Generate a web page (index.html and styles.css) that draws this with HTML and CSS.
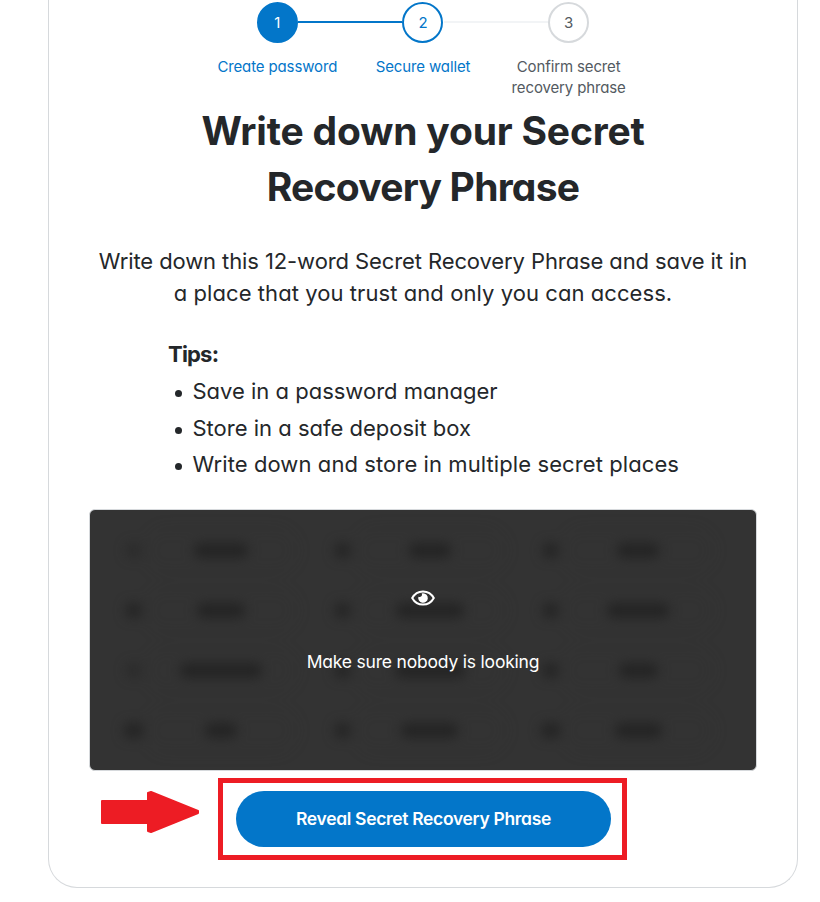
FILE: index.html
```html
<!DOCTYPE html>
<html lang="en">
<head>
<meta charset="utf-8">
<title>Secret Recovery Phrase</title>
<link rel="stylesheet" href="styles.css">
</head>
<body>
<main class="card">
  <ol class="steps">
    <li class="step step-done"><span class="dot">1</span><span class="label">Create password</span></li>
    <li class="step step-active"><span class="dot">2</span><span class="label">Secure wallet</span></li>
    <li class="step"><span class="dot">3</span><span class="label label-muted">Confirm secret<br>recovery phrase</span></li>
  </ol>
  <h1>Write down your Secret<br><span class="title-end">Recovery Phrase</span></h1>
  <p class="intro">Write down this 12-word Secret Recovery Phrase and save it in<br><span class="intro-end">a place that you trust and only you can access.</span></p>
  <section class="tips">
    <h2>Tips:</h2>
    <ul>
      <li>Save in a password manager</li>
      <li>Store in a safe deposit box</li>
      <li class="last">Write down and store in multiple secret places</li>
    </ul>
  </section>
  <section class="phrase">
    <div class="words" aria-hidden="true">
      <div class="word"><i class="num thin"></i><b><i style="width:54px"></i></b></div>
      <div class="word"><i class="num"></i><b><i style="width:42px"></i></b></div>
      <div class="word"><i class="num"></i><b><i style="width:42px"></i></b></div>
      <div class="word"><i class="num"></i><b><i style="width:48px"></i></b></div>
      <div class="word"><i class="num"></i><b><i style="width:68px"></i></b></div>
      <div class="word"><i class="num"></i><b><i style="width:62px"></i></b></div>
      <div class="word"><i class="num thin"></i><b><i style="width:82px"></i></b></div>
      <div class="word"><i class="num"></i><b><i style="width:70px"></i></b></div>
      <div class="word"><i class="num"></i><b><i style="width:39px"></i></b></div>
      <div class="word"><i class="num wide"></i><b><i style="width:32px"></i></b></div>
      <div class="word"><i class="num"></i><b><i style="width:57px"></i></b></div>
      <div class="word"><i class="num wide"></i><b><i style="width:47px"></i></b></div>
    </div>
    <div class="cover">
      <svg class="eye" viewBox="0 0 24 16" width="24" height="16">
        <path d="M1.2 8C3.4 3.9 7.300 1.400 12 1.400S20.600 3.900 22.800 8C20.600 12.100 16.700 14.600 12 14.600S3.400 12.100 1.200 8Z" fill="none" stroke="#fff" stroke-width="2"/>
        <path d="M12 3.200a4.800 4.800 0 1 1-4.600 3.500 2.400 2.400 0 0 0 3.300-3.300A4.800 4.800 0 0 1 12 3.200Z" fill="#fff"/>
      </svg>
      <span>Make sure nobody is looking</span>
    </div>
  </section>
  <div class="action">
    <svg class="arrow" viewBox="0 0 98 42" width="98" height="42"><path d="M1 10H47V2L50 1L97 20V22L50 41L47 40V32H1Z" fill="#ed1c24" stroke="#ed1c24" stroke-width="2" stroke-linejoin="round"/></svg>
    <div class="frame"><button>Reveal Secret Recovery Phrase</button></div>
  </div>
</main>
</body>
</html>
```
FILE: styles.css
```css
* { box-sizing: border-box; }
body { margin: 0; height: 902px; overflow: hidden; background: #fff; color: #24272a; font-family: Inter, Lato, sans-serif; font-feature-settings: "cv11", "ss03"; }
.card { width: 750px; height: 888px; margin-left: 48px; padding: 2px 40px 0; border: 1px solid #d6d9dc; border-top: 0; border-radius: 0 0 29px 29px; white-space: nowrap; }
ol, ul { margin: 0; padding: 0; }
.steps { width: 437px; margin: 0 auto; display: grid; grid-template-columns: repeat(3, 1fr); list-style: none; }
.step { position: relative; display: flex; flex-direction: column; align-items: center; color: #0376c9; }
.dot { display: flex; align-items: center; justify-content: center; width: 41px; height: 41px; border: 2px solid #d6d9dc; border-radius: 50%; background: #fff; color: #535a61; font-size: 15px; }
.step-done .dot { background: #0376c9; border-color: #0376c9; color: #fff; }
.step-active .dot { border-color: #0376c9; color: #0376c9; }
.step:not(:last-child)::after { content: ""; position: absolute; top: 19px; left: calc(50% + 21px); width: 104px; height: 2px; background: #f2f4f6; }
.step-done:not(:last-child)::after { background: #0376c9; }
.label { margin-top: 13px; font-size: 15px; line-height: 21px; text-align: center; letter-spacing: -.13px; }
.label-muted { color: #535a61; }
h1 { margin: 5px 0 0; font-size: 39px; line-height: 56px; font-weight: 750; text-align: center; letter-spacing: -.18px; }
.title-end { letter-spacing: -.75px; }
.intro { margin: 30px 0 0; font-size: 22px; line-height: 32px; text-align: center; letter-spacing: -.1px; }
.intro-end { letter-spacing: .07px; }
.tips { margin: 29px 0 0 79px; font-size: 22px; }
h2 { margin: 0; font-size: 22px; line-height: 32px; letter-spacing: -.8px; }
ul { padding-left: 25px; margin-top: 3px; list-style: none; }
.tips ul { padding-left: 24.5px; }
.tips li { position: relative; line-height: 36.6px; }
.tips .last { letter-spacing: .09px; }
.tips li::before { content: ""; position: absolute; left: -18px; top: 17px; width: 7px; height: 7px; border-radius: 50%; background: #24272a; }
.phrase { position: relative; width: 668px; height: 262px; margin-top: 26px; border: 1px solid #d6d9dc; border-radius: 6px; background: #333; overflow: hidden; }
.words { display: grid; grid-template-columns: repeat(3, 208.5px); grid-auto-rows: 60px; padding: 11px 0 0 31px; filter: blur(6px); }
.word { display: flex; align-items: center; gap: 10px; }
.word i { display: block; height: 15px; border-radius: 5px; background: #242424; }
.word .num { width: 15px; margin: 0 6px 0 5px; }
.word .thin { opacity: .55; }
.word .wide { width: 19px; margin: 0 4px 0 3px; }
.word b { display: flex; align-items: center; justify-content: center; width: 152px; height: 45px; border: 1px solid #2f2f2f; border-radius: 23px; margin-left: -12px; }
.cover { position: absolute; inset: 0; display: flex; flex-direction: column; align-items: center; padding-top: 80px; color: #fff; font-size: 17.5px; letter-spacing: -.2px; }
.cover span { margin-top: 43px; line-height: 26px; }
.action { display: flex; align-items: flex-start; margin-top: 7px; }
.arrow { flex: none; margin: 13px 19px 0 12px; }
.frame { flex: none; width: 409px; height: 82px; padding: 8px 13px; border: 5px solid #ed1c24; }
button { width: 375px; height: 56px; padding: 0; border: 0; border-radius: 28px; background: #0376c9; color: #fff; font: 600 17.5px Inter, Lato, sans-serif; font-feature-settings: inherit; letter-spacing: -.33px; }
```
